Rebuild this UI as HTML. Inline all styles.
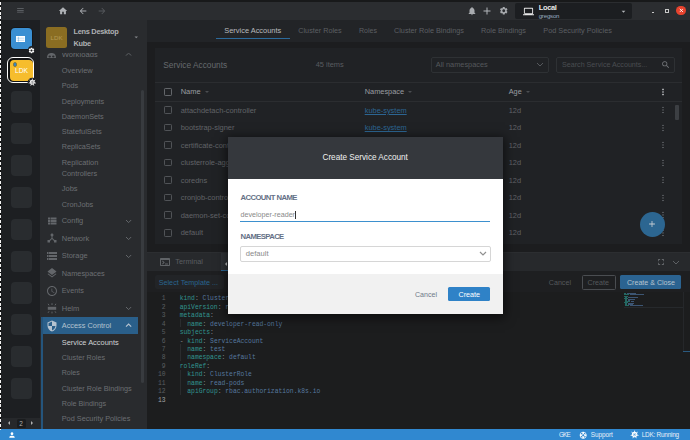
<!DOCTYPE html>
<html><head><meta charset="utf-8"><title>Lens</title>
<style>
html,body{margin:0;padding:0;background:#1c1d1f;}
body{width:690px;height:440px;overflow:hidden;position:relative;font-family:"Liberation Sans", sans-serif;}
i,.abs,.t,.ln,.cl{position:absolute;display:block;font-style:normal}
.t{line-height:12px;height:12px;white-space:nowrap}
.strip{left:0;top:0;width:690px;height:2px;background:#18191a}
.dash{left:0;top:0;width:1.2px;height:430px;background:repeating-linear-gradient(to bottom,#111 0,#111 1.85px,#f4f4f4 1.85px,#f4f4f4 4.85px)}
.topbar{left:1.2px;top:1.7px;width:689px;height:18.6px;background:#2b2d30}
.localbox{left:515px;top:2.7px;width:116.7px;height:16.6px;background:#1c1e21;border-radius:2px}
.hotbar{left:1.2px;top:20.3px;width:39px;height:408.6px;background:#1d1f22}
.hbsel{left:1.2px;top:417.5px;width:39px;height:11.4px;background:#26282b}
.hbnum{left:17px;top:418.5px;width:8.6px;height:9.4px;background:#1a1c1e;border-radius:1.5px}
.cell{left:10.5px;width:21.6px;height:21.2px;border-radius:4px;background:#292c2f}
.sidebar{left:40.2px;top:20.3px;width:106.5px;height:408.6px;background:#292b2e}
.main{left:146.7px;top:20.3px;width:543.3px;height:408.6px;background:#1c1d1f}
.tabs{left:146.7px;top:20.3px;width:543.3px;height:21.6px;background:#222427}
.tabline{left:216px;top:37.9px;width:74px;height:1.2px;background:#2c6a9b}
.card{left:155px;top:47.6px;width:526.8px;height:196.4px;background:#202225}
.hl{left:155px;width:526.8px;height:1px;background:#2b2d30}
.cb{left:164.2px;width:5.6px;height:5.6px;border:1px solid #505357;border-radius:1.2px}
.dots{left:662.3px;width:1.6px;height:8px;background:radial-gradient(circle,#5d6064 0.75px,transparent 0.95px) 0 0/1.6px 2.67px repeat-y}
.dots.hd{background:radial-gradient(circle,#b5b8bb 0.8px,transparent 1px) 0 0/1.6px 2.67px repeat-y}
.sort{top:91px;width:0;height:0;border-left:2px solid transparent;border-right:2px solid transparent;border-top:2.2px solid #4a4d51}
.selbox{left:431.2px;top:56.8px;width:116px;height:14.4px;border:0.9px solid #2e3134;border-radius:2px}
.searchbox{left:556.4px;top:56.8px;width:116.4px;height:14.4px;border:0.9px solid #2e3134;border-radius:2px}
.vscroll{left:675px;top:104.5px;width:3.6px;height:15.5px;background:#3c3f43;border-radius:1px}
.sscroll{left:141px;top:90px;width:3.2px;height:292.5px;background:#383b3f;border-radius:1.5px}
.fab{left:639.9px;top:211.8px;width:24.8px;height:24.8px;border-radius:50%;background:#2c6691}
.dockline{left:146.7px;top:252.3px;width:543.3px;height:1px;background:#2c2e31}
.dockhead{left:146.7px;top:253.3px;width:543.3px;height:17.5px;background:#27292c}
.docktab{left:220.8px;top:253.3px;width:60px;height:16.4px;background:#303337;border-bottom:1.1px solid #2c6a9b}
.dtic{left:225.4px;top:261.6px;border-top:2.2px solid transparent;border-bottom:2.2px solid transparent;border-right:2.4px solid #c8cacc}
.dockinfo{left:146.7px;top:270.8px;width:543.3px;height:21px;background:#1e1f21}
.tmpl{left:154.8px;top:274.8px;width:69.2px;height:14.3px;background:#222427;border-radius:2px}
.editor{left:146.7px;top:291.5px;width:543.3px;height:137.4px;background:#1c1d1e}
.btn1{left:581.8px;top:275px;width:32.2px;height:12.8px;border:0.9px solid #4a4d51;border-radius:1.5px}
.btn2{left:620.4px;top:275px;width:61px;height:14.4px;background:#2b6391;border-radius:1.5px}
.ln{left:150px;width:15.5px;text-align:right;font:6.34px/10px "Liberation Mono", monospace;height:10px;color:#5a5d60}
.ln.cur{color:#a0a2a4}
.cl{left:179.7px;font:6.34px/10px "Liberation Mono", monospace;height:10px;white-space:pre;color:#6a6d70}
.k{color:#319590}.v{color:#56789f}.p{color:#85888b}
.guide{left:180.2px;width:0.7px;height:8.47px;background:#2a2c2e}
.sideact{left:41.2px;top:317.2px;width:97px;height:17px;background:#2a5f8a}
.sideborder{left:40.6px;top:317.2px;width:2.2px;height:111.7px;background:#25557c}
.avatar{left:46px;top:27px;width:21.2px;height:21px;border-radius:2.5px;background:#8a6d22;text-align:center;line-height:21px;color:#b39a55;font-size:6.17px}
.hb1{left:10.5px;top:27.9px;width:21.7px;height:21.4px;border-radius:4px;box-shadow:0 0 0 0.8px #141516;background:#3a8fd2}
.hb2ring{left:7.3px;top:56.8px;width:25.2px;height:24.4px;border-radius:6px;border:1.4px solid #fff;background:#121314}
.hb2{left:10.3px;top:59.9px;width:22.3px;height:21.4px;border-radius:4px;background:#f6bd2d;text-align:center;line-height:21.4px;color:#fff;font-size:6.68px}
.hbdot{left:12.6px;top:61.9px;width:2.8px;height:2.8px;border-radius:50%;background:#2f86cf;border:0.5px solid #8a7a3a}
.dlgshadow{left:227.6px;top:137px;width:275.6px;height:177px;box-shadow:0 2px 10px 2px rgba(0,0,0,.55)}
.dlghead{left:227.6px;top:137px;width:275.6px;height:42px;background:#35383d}
.dlgbody{left:227.6px;top:178.8px;width:275.6px;height:95px;background:#fff}
.dlgfoot{left:227.6px;top:273.6px;width:275.6px;height:40.3px;background:#f1f1f1}
.uline{left:240.3px;top:220.6px;width:250px;height:1.4px;background:#3d90ce}
.caret{left:295.4px;top:210.5px;width:0.7px;height:8.4px;background:#333}
.dsel{left:240.3px;top:245.5px;width:249.2px;height:14.5px;border:0.9px solid #d6d6d6;border-radius:2px;background:#fff}
.dbtn{left:448px;top:287px;width:42.3px;height:14.4px;background:#2f82c7;border-radius:1.5px}
.status{left:0;top:428.9px;width:690px;height:11.1px;background:#3088d0}
.mm{left:624px;top:293.3px;width:20px;height:13.7px;opacity:.55;background:repeating-linear-gradient(to bottom,#2a6a68 0,#2a6a68 0.6px,transparent 0.6px,transparent 1.05px)}
.mmline{left:624px;top:306.8px;width:58.6px;height:0.7px;background:#26292c}
.ruler{left:682.6px;top:291.5px;width:0.7px;height:60px;background:#25272a}
.rtick{left:682.6px;top:350.9px;width:7.4px;height:0.9px;background:#2a5a80}
.winc{left:676.4px;top:6.2px;width:9.2px;height:9.2px;border-radius:50%;background:#e8432e}
.winmin{left:651.8px;top:12px;width:2.6px;height:1.1px;background:#c8c8c8}
.winmax{left:665.2px;top:8.8px;width:2.2px;height:2.2px;border:0.9px solid #c8c8c8}
</style></head><body>
<i class="strip"></i>
<i class="topbar"></i>
<i class="localbox"></i>
<i class="hotbar"></i><i class="hbsel"></i><i class="hbnum"></i>
<i class="cell" style="top:91.41px"></i><i class="cell" style="top:123.24px"></i><i class="cell" style="top:155.07px"></i><i class="cell" style="top:186.90px"></i><i class="cell" style="top:218.73px"></i><i class="cell" style="top:250.56px"></i><i class="cell" style="top:282.39px"></i><i class="cell" style="top:314.22px"></i><i class="cell" style="top:346.05px"></i><i class="cell" style="top:377.88px"></i>
<i class="hb1"></i>
<i class="hb2ring"></i><div class="abs hb2">LDK</div><i class="hbdot"></i>
<i class="sidebar"></i>
<i class="sideact"></i><i class="sideborder"></i>
<i class="sscroll"></i>
<div class="abs avatar">LDK</div>
<i class="main"></i><i class="tabs"></i><i class="tabline"></i>
<i class="card"></i>
<i class="selbox"></i><i class="searchbox"></i>
<i class="hl" style="top:81.6px"></i><i class="hl" style="top:101px"></i><i class="cb" style="top:106.20px"></i><i class="dots" style="top:106.00px"></i><i class="cb" style="top:123.73px"></i><i class="dots" style="top:123.53px"></i><i class="cb" style="top:141.26px"></i><i class="dots" style="top:141.06px"></i><i class="cb" style="top:158.79px"></i><i class="dots" style="top:158.59px"></i><i class="cb" style="top:176.32px"></i><i class="dots" style="top:176.12px"></i><i class="cb" style="top:193.85px"></i><i class="dots" style="top:193.65px"></i><i class="cb" style="top:211.38px"></i><i class="dots" style="top:211.18px"></i><i class="cb" style="top:228.91px"></i><i class="dots" style="top:228.71px"></i><i class="cb" style="top:88px;border-color:#63666a"></i><i class="dots hd" style="top:87.8px"></i><i class="sort" style="left:204.5px"></i><i class="sort" style="left:407.5px"></i><i class="sort" style="left:525.5px"></i>
<i class="vscroll"></i>
<i class="fab"></i>
<i class="dockline"></i><i class="dockhead"></i><i class="docktab"></i><i class="dtic"></i><i class="dockinfo"></i><i class="tmpl"></i>
<i class="editor"></i>
<i class="btn1"></i><i class="btn2"></i>
<i class="guide" style="top:318.88px"></i><i class="guide" style="top:344.28px"></i><i class="guide" style="top:352.75px"></i><i class="guide" style="top:369.69px"></i><i class="guide" style="top:378.16px"></i><i class="guide" style="top:386.63px"></i>
<span class="ln" style="top:294.20px">1</span><span class="cl" style="top:294.20px"><span class="k">kind</span><span class="p">: </span><span class="v">ClusterRoleBinding</span></span><span class="ln" style="top:302.67px">2</span><span class="cl" style="top:302.67px"><span class="k">apiVersion</span><span class="p">: </span><span class="v">rbac.authorization.k8s.io/v1</span></span><span class="ln" style="top:311.14px">3</span><span class="cl" style="top:311.14px"><span class="k">metadata</span><span class="p">:</span></span><span class="ln" style="top:319.61px">4</span><span class="cl" style="top:319.61px"><span class="p">  </span><span class="k">name</span><span class="p">: </span><span class="v">developer-read-only</span></span><span class="ln" style="top:328.08px">5</span><span class="cl" style="top:328.08px"><span class="k">subjects</span><span class="p">:</span></span><span class="ln" style="top:336.55px">6</span><span class="cl" style="top:336.55px"><span class="p">- </span><span class="k">kind</span><span class="p">: </span><span class="v">ServiceAccount</span></span><span class="ln" style="top:345.02px">7</span><span class="cl" style="top:345.02px"><span class="p">  </span><span class="k">name</span><span class="p">: </span><span class="v">test</span></span><span class="ln" style="top:353.49px">8</span><span class="cl" style="top:353.49px"><span class="p">  </span><span class="k">namespace</span><span class="p">: </span><span class="v">default</span></span><span class="ln" style="top:361.96px">9</span><span class="cl" style="top:361.96px"><span class="k">roleRef</span><span class="p">:</span></span><span class="ln" style="top:370.43px">10</span><span class="cl" style="top:370.43px"><span class="p">  </span><span class="k">kind</span><span class="p">: </span><span class="v">ClusterRole</span></span><span class="ln" style="top:378.90px">11</span><span class="cl" style="top:378.90px"><span class="p">  </span><span class="k">name</span><span class="p">: </span><span class="v">read-pods</span></span><span class="ln" style="top:387.37px">12</span><span class="cl" style="top:387.37px"><span class="p">  </span><span class="k">apiGroup</span><span class="p">: </span><span class="v">rbac.authorization.k8s.io</span></span><span class="ln cur" style="top:395.84px">13</span>
<i style="left:624.00px;top:293.40px;width:2.00px;height:0.6px;background:#246863"></i><i style="left:627.00px;top:293.40px;width:9.00px;height:0.6px;background:#3c5573"></i><i style="left:624.00px;top:294.45px;width:5.00px;height:0.6px;background:#246863"></i><i style="left:630.00px;top:294.45px;width:14.00px;height:0.6px;background:#3c5573"></i><i style="left:624.00px;top:295.50px;width:4.00px;height:0.6px;background:#246863"></i><i style="left:625.00px;top:296.55px;width:2.00px;height:0.6px;background:#246863"></i><i style="left:628.00px;top:296.55px;width:9.50px;height:0.6px;background:#3c5573"></i><i style="left:624.00px;top:297.60px;width:4.00px;height:0.6px;background:#246863"></i><i style="left:625.00px;top:298.65px;width:2.00px;height:0.6px;background:#246863"></i><i style="left:628.00px;top:298.65px;width:7.00px;height:0.6px;background:#3c5573"></i><i style="left:625.00px;top:299.70px;width:2.00px;height:0.6px;background:#246863"></i><i style="left:628.00px;top:299.70px;width:2.00px;height:0.6px;background:#3c5573"></i><i style="left:625.00px;top:300.75px;width:4.50px;height:0.6px;background:#246863"></i><i style="left:630.50px;top:300.75px;width:3.50px;height:0.6px;background:#3c5573"></i><i style="left:624.00px;top:301.80px;width:3.50px;height:0.6px;background:#246863"></i><i style="left:625.00px;top:302.85px;width:2.00px;height:0.6px;background:#246863"></i><i style="left:628.00px;top:302.85px;width:5.50px;height:0.6px;background:#3c5573"></i><i style="left:625.00px;top:303.90px;width:2.00px;height:0.6px;background:#246863"></i><i style="left:628.00px;top:303.90px;width:4.50px;height:0.6px;background:#3c5573"></i><i style="left:625.00px;top:304.95px;width:4.00px;height:0.6px;background:#246863"></i><i style="left:630.00px;top:304.95px;width:12.50px;height:0.6px;background:#3c5573"></i><i class="mmline"></i><i class="ruler"></i><i class="rtick"></i>
<i class="status"></i>
<i class="winmin"></i><i class="winmax"></i><i class="winc"></i>
<span class="t" style="left:538.70px;top:1.70px;font-size:7.4px;color:#e8e8e8;font-weight:700;letter-spacing:-0.266px;">Local</span><span class="t" style="left:538.70px;top:9.90px;font-size:6.1px;color:#9aabc2;letter-spacing:-0.206px;">gregson</span><span class="t" style="left:73.50px;top:26.30px;font-size:7.4px;color:#aeb0b3;font-weight:700;letter-spacing:-0.294px;">Lens Desktop</span><span class="t" style="left:73.50px;top:37.70px;font-size:7.4px;color:#aeb0b3;font-weight:700;letter-spacing:-0.250px;">Kube</span><span class="t" style="left:61.75px;top:48.90px;font-size:7.65px;color:#6c6f73;clip-path:inset(4.1px 0 0 0);">Workloads</span><span class="t" style="left:61.75px;top:65.25px;font-size:7.44px;color:#6c6f73;">Overview</span><span class="t" style="left:61.75px;top:80.40px;font-size:7.24px;color:#6c6f73;">Pods</span><span class="t" style="left:61.75px;top:95.70px;font-size:7.25px;color:#6c6f73;">Deployments</span><span class="t" style="left:61.75px;top:110.90px;font-size:7.27px;color:#6c6f73;">DaemonSets</span><span class="t" style="left:61.75px;top:126.25px;font-size:7.42px;color:#6c6f73;">StatefulSets</span><span class="t" style="left:61.75px;top:141.40px;font-size:7.22px;color:#6c6f73;">ReplicaSets</span><span class="t" style="left:61.75px;top:156.90px;font-size:7.38px;color:#6c6f73;">Replication</span><span class="t" style="left:61.75px;top:168.00px;font-size:7.34px;color:#6c6f73;">Controllers</span><span class="t" style="left:61.75px;top:183.40px;font-size:7.48px;color:#6c6f73;">Jobs</span><span class="t" style="left:61.75px;top:198.60px;font-size:7.36px;color:#6c6f73;">CronJobs</span><span class="t" style="left:61.75px;top:215.25px;font-size:7.44px;color:#6c6f73;">Config</span><span class="t" style="left:61.75px;top:232.50px;font-size:7.5px;color:#6c6f73;">Network</span><span class="t" style="left:61.75px;top:250.25px;font-size:7.42px;color:#6c6f73;">Storage</span><span class="t" style="left:61.75px;top:267.50px;font-size:7.37px;color:#6c6f73;">Namespaces</span><span class="t" style="left:61.75px;top:285.00px;font-size:7.2px;color:#6c6f73;">Events</span><span class="t" style="left:61.75px;top:302.50px;font-size:7.5px;color:#6c6f73;">Helm</span><span class="t" style="left:61.75px;top:320.00px;font-size:7.36px;color:#b5c3d0;">Access Control</span><span class="t" style="left:61.75px;top:336.50px;font-size:7.43px;color:#d0d2d4;">Service Accounts</span><span class="t" style="left:61.75px;top:351.70px;font-size:7.21px;color:#6c6f73;">Cluster Roles</span><span class="t" style="left:61.75px;top:367.00px;font-size:7.04px;color:#6c6f73;">Roles</span><span class="t" style="left:61.75px;top:382.50px;font-size:7.28px;color:#6c6f73;">Cluster Role Bindings</span><span class="t" style="left:61.75px;top:397.90px;font-size:7.21px;color:#6c6f73;">Role Bindings</span><span class="t" style="left:61.75px;top:412.70px;font-size:7.31px;color:#6c6f73;">Pod Security Policies</span><span class="t" style="left:224.30px;top:24.50px;font-size:7.43px;color:#b9bbbe;">Service Accounts</span><span class="t" style="left:298.30px;top:24.50px;font-size:7.23px;color:#5c5f63;">Cluster Roles</span><span class="t" style="left:359.00px;top:24.50px;font-size:7.04px;color:#5c5f63;">Roles</span><span class="t" style="left:394.00px;top:24.50px;font-size:7.28px;color:#5c5f63;">Cluster Role Bindings</span><span class="t" style="left:481.00px;top:24.50px;font-size:7.29px;color:#5c5f63;">Role Bindings</span><span class="t" style="left:543.30px;top:24.50px;font-size:7.31px;color:#5c5f63;">Pod Security Policies</span><span class="t" style="left:163.30px;top:58.80px;font-size:8.34px;color:#666a6e;">Service Accounts</span><span class="t" style="left:315.70px;top:58.80px;font-size:7.41px;color:#595c60;">45 items</span><span class="t" style="left:435.75px;top:58.80px;font-size:7.37px;color:#55585c;">All namespaces</span><span class="t" style="left:562.00px;top:58.80px;font-size:7.15px;color:#4a4d51;">Search Service Accounts...</span><span class="t" style="left:180.70px;top:86.30px;font-size:7.5px;color:#9a9da1;">Name</span><span class="t" style="left:364.70px;top:86.30px;font-size:7.4px;color:#9a9da1;">Namespace</span><span class="t" style="left:508.75px;top:86.30px;font-size:7.31px;color:#9a9da1;">Age</span><span class="t" style="left:180.70px;top:104.70px;font-size:7.45px;color:#606367;">attachdetach-controller</span><span class="t" style="left:364.70px;top:104.70px;font-size:7.42px;color:#2c6592;text-decoration:underline;">kube-system</span><span class="t" style="left:508.75px;top:104.70px;font-size:7.4px;color:#606367;">12d</span><span class="t" style="left:180.70px;top:122.23px;font-size:7.45px;color:#606367;">bootstrap-signer</span><span class="t" style="left:364.70px;top:122.23px;font-size:7.42px;color:#2c6592;text-decoration:underline;">kube-system</span><span class="t" style="left:508.75px;top:122.23px;font-size:7.4px;color:#606367;">12d</span><span class="t" style="left:180.70px;top:139.76px;font-size:7.45px;color:#606367;">certificate-controller</span><span class="t" style="left:364.70px;top:139.76px;font-size:7.42px;color:#2c6592;text-decoration:underline;">kube-system</span><span class="t" style="left:508.75px;top:139.76px;font-size:7.4px;color:#606367;">12d</span><span class="t" style="left:180.70px;top:157.29px;font-size:7.45px;color:#606367;">clusterrole-aggregation-controller</span><span class="t" style="left:364.70px;top:157.29px;font-size:7.42px;color:#2c6592;text-decoration:underline;">kube-system</span><span class="t" style="left:508.75px;top:157.29px;font-size:7.4px;color:#606367;">12d</span><span class="t" style="left:180.70px;top:174.82px;font-size:7.45px;color:#606367;">coredns</span><span class="t" style="left:364.70px;top:174.82px;font-size:7.42px;color:#2c6592;text-decoration:underline;">kube-system</span><span class="t" style="left:508.75px;top:174.82px;font-size:7.4px;color:#606367;">12d</span><span class="t" style="left:180.70px;top:192.35px;font-size:7.45px;color:#606367;">cronjob-controller</span><span class="t" style="left:364.70px;top:192.35px;font-size:7.42px;color:#2c6592;text-decoration:underline;">kube-system</span><span class="t" style="left:508.75px;top:192.35px;font-size:7.4px;color:#606367;">12d</span><span class="t" style="left:180.70px;top:209.88px;font-size:7.45px;color:#606367;">daemon-set-controller</span><span class="t" style="left:364.70px;top:209.88px;font-size:7.42px;color:#2c6592;text-decoration:underline;">kube-system</span><span class="t" style="left:508.75px;top:209.88px;font-size:7.4px;color:#606367;">12d</span><span class="t" style="left:180.70px;top:227.41px;font-size:7.45px;color:#606367;">default</span><span class="t" style="left:364.70px;top:227.41px;font-size:7.42px;color:#2c6592;text-decoration:underline;">default</span><span class="t" style="left:508.75px;top:227.41px;font-size:7.4px;color:#606367;">12d</span><span class="t" style="left:175.30px;top:256.20px;font-size:7.33px;color:#5a5d61;">Terminal</span><span class="t" style="left:158.70px;top:276.50px;font-size:7.22px;color:#29648f;">Select Template ...</span><span class="t" style="left:548.80px;top:276.70px;font-size:7.13px;color:#55585c;">Cancel</span><span class="t" style="left:587.50px;top:276.70px;font-size:7.16px;color:#55585c;">Create</span><span class="t" style="left:627.00px;top:276.70px;font-size:7.08px;color:#b8c4cf;">Create &amp; Close</span><span class="t" style="left:558.90px;top:429.30px;font-size:6.3px;color:#e8f0f8;letter-spacing:-0.702px;">GKE</span><span class="t" style="left:590.70px;top:429.30px;font-size:6.4px;color:#e8f0f8;letter-spacing:-0.045px;">Support</span><span class="t" style="left:641.70px;top:429.30px;font-size:6.4px;color:#e8f0f8;letter-spacing:-0.212px;">LDK: Running</span><span class="t" style="left:19.30px;top:417.50px;font-size:6.47px;color:#b0b0b0;">2</span>
<svg class="abs" style="left:124.60px;top:52.30px;clip-path:inset(1px 0 0 0);" width="7.2" height="4.6" viewBox="-1 -1 7.2 4.6"><path d="M0,2.6 L2.6,0 L5.2,2.6" fill="none" stroke="#63666a" stroke-width="1.0"/></svg><svg class="abs" style="left:124.60px;top:218.75px;" width="7.2" height="4.6" viewBox="-1 -1 7.2 4.6"><path d="M0,0 L2.6,2.6 L5.2,0" fill="none" stroke="#63666a" stroke-width="1.0"/></svg><svg class="abs" style="left:124.60px;top:236.00px;" width="7.2" height="4.6" viewBox="-1 -1 7.2 4.6"><path d="M0,0 L2.6,2.6 L5.2,0" fill="none" stroke="#63666a" stroke-width="1.0"/></svg><svg class="abs" style="left:124.60px;top:253.75px;" width="7.2" height="4.6" viewBox="-1 -1 7.2 4.6"><path d="M0,0 L2.6,2.6 L5.2,0" fill="none" stroke="#63666a" stroke-width="1.0"/></svg><svg class="abs" style="left:124.60px;top:306.00px;" width="7.2" height="4.6" viewBox="-1 -1 7.2 4.6"><path d="M0,0 L2.6,2.6 L5.2,0" fill="none" stroke="#63666a" stroke-width="1.0"/></svg><svg class="abs" style="left:124.60px;top:323.20px;" width="7.2" height="4.6" viewBox="-1 -1 7.2 4.6"><path d="M0,2.6 L2.6,0 L5.2,2.6" fill="none" stroke="#b5c3d0" stroke-width="1.2"/></svg><svg class="abs" style="left:536.40px;top:62.10px;" width="8" height="5.0" viewBox="-1 -1 8 5.0"><path d="M0,0 L3.0,3.0 L6,0" fill="none" stroke="#55585c" stroke-width="1.0"/></svg><svg class="abs" style="left:671.80px;top:259.80px;" width="8" height="5.0" viewBox="-1 -1 8 5.0"><path d="M0,0 L3.0,3.0 L6,0" fill="none" stroke="#5d6064" stroke-width="1.0"/></svg><svg class="abs" style="left:15.90px;top:6.30px;" width="8.8" height="8.8" viewBox="0 0 24 24"><path fill="#6a6d71" d="M3 18h18v-2H3v2zm0-5h18v-2H3v2zm0-7v2h18V6H3z"/></svg><svg class="abs" style="left:58.30px;top:5.90px;" width="10" height="10" viewBox="0 0 24 24"><path fill="#aeb1b5" d="M10 20v-6h4v6h5v-8h3L12 3 2 12h3v8z"/></svg><svg class="abs" style="left:78.00px;top:5.90px;" width="10" height="10" viewBox="0 0 24 24"><path fill="#a9acb0" d="M20 11H7.83l5.59-5.59L12 4l-8 8 8 8 1.41-1.41L7.83 13H20v-2z"/></svg><svg class="abs" style="left:97.40px;top:5.90px;" width="10" height="10" viewBox="0 0 24 24"><path fill="#55585c" d="M12 4l-1.41 1.41L16.17 11H4v2h12.17l-5.58 5.59L12 20l8-8z"/></svg><svg class="abs" style="left:466.70px;top:6.00px;" width="10" height="10" viewBox="0 0 24 24"><path fill="#a8abaf" d="M12 22c1.1 0 2-.9 2-2h-4c0 1.1.89 2 2 2zm6-6v-5c0-3.07-1.64-5.64-4.5-6.32V4c0-.83-.67-1.500-1.500-1.500s-1.500.67-1.500 1.500v.68C7.630 5.360 6 7.920 6 11v5l-2 2v1h16v-1l-2-2z"/></svg><svg class="abs" style="left:480.70px;top:5.00px;" width="12" height="12" viewBox="0 0 24 24"><path fill="#b2b5b9" d="M19 13h-6v6h-2v-6H5v-2h6V5h2v6h6v2z"/></svg><svg class="abs" style="left:498.95px;top:6.25px;" width="9.5" height="9.5" viewBox="0 0 24 24"><path fill="#a8abaf" d="M19.140 12.940c.04-.3.060-.610.060-.940 0-.320-.020-.640-.070-.940l2.030-1.580a.49.49 0 0 0 .120-.610l-1.920-3.320a.488.488 0 0 0-.590-.220l-2.390.96c-.5-.38-1.030-.7-1.620-.94l-.36-2.540a.484.484 0 0 0-.48-.410h-3.840c-.24 0-.43.170-.47.410l-.36 2.540c-.59.240-1.130.570-1.620.940l-2.390-.96c-.22-.080-.47 0-.59.220L2.740 8.870c-.12.210-.08.470.12.610l2.030 1.580c-.05.3-.09.630-.09.940s.02.640.07.940l-2.030 1.580a.49.49 0 0 0-.12.610l1.920 3.320c.12.220.37.290.59.220l2.390-.96c.5.380 1.030.7 1.620.94l.36 2.540c.05.240.24.410.48.410h3.840c.24 0 .44-.17.470-.41l.36-2.540c.59-.24 1.130-.56 1.620-.94l2.390.96c.22.080.47 0 .59-.22l1.920-3.320c.12-.22.070-.47-.12-.61l-2.010-1.580zM12 15.600c-1.980 0-3.600-1.620-3.600-3.600s1.620-3.600 3.600-3.600 3.600 1.620 3.600 3.600-1.620 3.600-3.600 3.600z"/></svg><svg class="abs" style="left:522.50px;top:5.50px;" width="11" height="11" viewBox="0 0 24 24"><path fill="#e8e8e8" d="M20 18c1.1 0 1.990-.9 1.990-2L22 6c0-1.100-.9-2-2-2H4c-1.100 0-2 .9-2 2v10c0 1.100.9 2 2 2H0v2h24v-2h-4zM4 6h16v10H4V6z"/></svg><svg class="abs" style="left:619.20px;top:6.50px;" width="9" height="9" viewBox="0 0 24 24"><path fill="#b3b6ba" d="M7 10l5 5 5-5z"/></svg><svg class="abs" style="left:131.75px;top:33.35px;" width="8.5" height="8.5" viewBox="0 0 24 24"><path fill="#85888b" d="M7 10l5 5 5-5z"/></svg><svg class="abs" style="left:47.00px;top:53.00px;" width="9" height="5.3" viewBox="0 0 9 5.3"><path d="M0,5.300 C0,0.500 2.500,0 4.500,0 C6.500,0 9,0.500 9,5.300 Z" fill="#63666a"/><ellipse cx="2.700" cy="3.500" rx="1.250" ry="1" fill="#292b2e"/><ellipse cx="6.300" cy="3.500" rx="1.250" ry="1" fill="#292b2e"/></svg><svg class="abs" style="left:45.50px;top:214.75px;" width="12" height="12" viewBox="0 0 24 24"><path fill="#63666a" d="M4 14h4v-4H4v4zm0 5h4v-4H4v4zM4 9h4V5H4v4zm5 5h12v-4H9v4zm0 5h12v-4H9v4zM9 5v4h12V5H9z"/></svg><svg class="abs" style="left:45.50px;top:232.00px;" width="12" height="12" viewBox="0 0 24 24"><path fill="#63666a" d="M17 16l-4-4V8.820C14.160 8.400 15 7.300 15 6c0-1.660-1.340-3-3-3S9 4.340 9 6c0 1.300.84 2.400 2 2.820V12l-4 4H3v5h5v-3.050l4-4.200 4 4.200V21h5v-5h-4z"/></svg><svg class="abs" style="left:45.50px;top:249.75px;" width="12" height="12" viewBox="0 0 24 24"><path fill="#63666a" d="M2 20h20v-4H2v4zm2-3h2v2H4v-2zM2 4v4h20V4H2zm4 3H4V5h2v2zm-4 7h20v-4H2v4zm2-3h2v2H4v-2z"/></svg><svg class="abs" style="left:45.50px;top:267.00px;" width="12" height="12" viewBox="0 0 24 24"><path fill="#63666a" d="M11.990 18.540l-7.370-5.730L3 14.070l9 7 9-7-1.630-1.270-7.380 5.740zM12 16l7.360-5.730L21 9l-9-7-9 7 1.630 1.270L12 16z"/></svg><svg class="abs" style="left:45.50px;top:284.50px;" width="12" height="12" viewBox="0 0 24 24"><path fill="#63666a" d="M11.990 2C6.470 2 2 6.480 2 12s4.470 10 9.990 10C17.520 22 22 17.520 22 12S17.520 2 11.990 2zM12 20c-4.420 0-8-3.580-8-8s3.580-8 8-8 8 3.580 8 8-3.580 8-8 8zm.5-13H11v6l5.250 3.150.75-1.230-4.500-2.670z"/></svg><svg class="abs" style="left:45.50px;top:319.50px;" width="12" height="12" viewBox="0 0 24 24"><path fill="#b5c3d0" d="M12 1L3 5v6c0 5.550 3.840 10.740 9 12 5.160-1.260 9-6.450 9-12V5l-9-4zm0 10.990h7c-.53 4.120-3.280 7.790-7 8.940V12H5V6.300l7-3.110v8.800z"/></svg><svg class="abs" style="left:45.50px;top:302.00px;" width="12" height="12" viewBox="0 0 20 20"><g stroke="#63666a" stroke-width="1.6" fill="none"><path d="M3 8h14v5H3z" stroke="none" fill="#63666a"/><path d="M5 5.500L3.500 3M10 5V2M15 5.500L16.500 3M5 15.500L3.500 18M10 16v3M15 15.500l1.500 2.500"/></g></svg><svg class="abs" style="left:647.30px;top:219.20px;" width="10" height="10" viewBox="0 0 24 24"><path fill="#c5cdd4" d="M19 13h-6v6h-2v-6H5v-2h6V5h2v6h6v2z"/></svg><svg class="abs" style="left:678.60px;top:8.40px;" width="4.8" height="4.8" viewBox="0 0 10 10"><path d="M1.500 1.500L8.500 8.500M8.500 1.500L1.500 8.500" stroke="#fff" stroke-width="1.8" fill="none"/></svg><svg class="abs" style="left:661.25px;top:60.05px;" width="9.5" height="9.5" viewBox="0 0 24 24"><path fill="#74777b" d="M15.500 14h-.79l-.28-.27A6.471 6.471 0 0 0 16 9.500 6.500 6.500 0 1 0 9.500 16c1.610 0 3.090-.59 4.230-1.570l.27.280v.79l5 4.990L20.490 19l-4.990-5zm-6 0C7.010 14 5 11.990 5 9.500S7.010 5 9.500 5 14 7.010 14 9.500 11.990 14 9.500 14z"/></svg><svg class="abs" style="left:655.60px;top:257.30px;" width="10" height="10" viewBox="0 0 24 24"><path fill="#63666a" d="M7 14H5v5h5v-2H7v-3zm-2-4h2V7h3V5H5v5zm12 7h-3v2h5v-5h-2v3zM14 5v2h3v3h2V5h-5z"/></svg><svg class="abs" style="left:159.00px;top:255.90px;" width="12" height="12" viewBox="0 0 24 24"><path fill="#606367" d="M20 4H4c-1.110 0-2 .9-2 2v12c0 1.100.89 2 2 2h16c1.100 0 2-.9 2-2V6c0-1.100-.89-2-2-2zm0 14H4V8h16v10zm-2-1h-6v-2h6v2zM7.500 17l-1.410-1.410L8.670 13l-2.590-2.590L7.500 9l4 4-4 4z"/></svg><svg class="abs" style="left:7.80px;top:430.80px;" width="8" height="8" viewBox="0 0 24 24"><path fill="#ffffff" d="M12 12c2.210 0 4-1.790 4-4s-1.790-4-4-4-4 1.790-4 4 1.790 4 4 4zm0 2c-2.670 0-8 1.340-8 4v2h16v-2c0-2.660-5.330-4-8-4z"/></svg><svg class="abs" style="left:579.30px;top:430.60px;" width="8.4" height="8.4" viewBox="0 0 24 24"><path fill="#ffffff" d="M12 2C6.480 2 2 6.480 2 12s4.480 10 10 10 10-4.480 10-10S17.520 2 12 2zm7.460 7.120l-2.780 1.150a4.982 4.982 0 0 0-2.950-2.940l1.150-2.780c2.100.8 3.770 2.470 4.580 4.570zM12 15c-1.660 0-3-1.340-3-3s1.340-3 3-3 3 1.340 3 3-1.340 3-3 3zM9.130 4.540l1.170 2.780a5 5 0 0 0-2.980 2.970L4.540 9.130a7.984 7.984 0 0 1 4.590-4.590zM4.540 14.870l2.780-1.150a4.968 4.968 0 0 0 2.970 2.960l-1.170 2.780a7.996 7.996 0 0 1-4.580-4.590zm10.340 4.590l-1.150-2.780a4.978 4.978 0 0 0 2.950-2.970l2.780 1.170a8.007 8.007 0 0 1-4.580 4.580z"/></svg><svg class="abs" style="left:629.00px;top:429.20px" width="11.2" height="11.2" viewBox="-5.6 -5.6 11.2 11.2"><circle cx="0" cy="0" r="2.23" fill="none" stroke="#ffffff" stroke-width="1.01"/><line x1="0.00" y1="-0.90" x2="0.00" y2="-3.60" stroke="#ffffff" stroke-width="0.86" stroke-linecap="round"/><line x1="0.70" y1="-0.56" x2="2.81" y2="-2.24" stroke="#ffffff" stroke-width="0.86" stroke-linecap="round"/><line x1="0.88" y1="0.20" x2="3.51" y2="0.80" stroke="#ffffff" stroke-width="0.86" stroke-linecap="round"/><line x1="0.39" y1="0.81" x2="1.56" y2="3.24" stroke="#ffffff" stroke-width="0.86" stroke-linecap="round"/><line x1="-0.39" y1="0.81" x2="-1.56" y2="3.24" stroke="#ffffff" stroke-width="0.86" stroke-linecap="round"/><line x1="-0.88" y1="0.20" x2="-3.51" y2="0.80" stroke="#ffffff" stroke-width="0.86" stroke-linecap="round"/><line x1="-0.70" y1="-0.56" x2="-2.81" y2="-2.24" stroke="#ffffff" stroke-width="0.86" stroke-linecap="round"/></svg><svg class="abs" style="left:26.70px;top:76.70px" width="10.6" height="10.6" viewBox="-5.3 -5.3 10.6 10.6"><circle cx="0" cy="0" r="4.6" fill="#1d1f22"/><circle cx="0" cy="0" r="2.05" fill="none" stroke="#ffffff" stroke-width="0.92"/><line x1="0.00" y1="-0.82" x2="0.00" y2="-3.30" stroke="#ffffff" stroke-width="0.79" stroke-linecap="round"/><line x1="0.65" y1="-0.51" x2="2.58" y2="-2.06" stroke="#ffffff" stroke-width="0.79" stroke-linecap="round"/><line x1="0.80" y1="0.18" x2="3.22" y2="0.73" stroke="#ffffff" stroke-width="0.79" stroke-linecap="round"/><line x1="0.36" y1="0.74" x2="1.43" y2="2.97" stroke="#ffffff" stroke-width="0.79" stroke-linecap="round"/><line x1="-0.36" y1="0.74" x2="-1.43" y2="2.97" stroke="#ffffff" stroke-width="0.79" stroke-linecap="round"/><line x1="-0.80" y1="0.18" x2="-3.22" y2="0.73" stroke="#ffffff" stroke-width="0.79" stroke-linecap="round"/><line x1="-0.65" y1="-0.51" x2="-2.58" y2="-2.06" stroke="#ffffff" stroke-width="0.79" stroke-linecap="round"/></svg><i class="abs" style="left:7.6px;top:420.6px;border-top:2.4px solid transparent;border-bottom:2.4px solid transparent;border-right:2.8px solid #b0b0b0"></i><i class="abs" style="left:31.4px;top:420.6px;border-top:2.4px solid transparent;border-bottom:2.4px solid transparent;border-left:2.8px solid #b0b0b0"></i><i class="abs" style="left:27.5px;top:46.3px;width:8.4px;height:8.4px;border-radius:50%;background:#1d1f22"></i><svg class="abs" style="left:28.20px;top:47.00px;" width="7" height="7" viewBox="0 0 24 24"><path fill="#ffffff" d="M19.140 12.940c.04-.3.060-.610.060-.940 0-.320-.020-.640-.070-.940l2.030-1.580a.49.49 0 0 0 .120-.610l-1.920-3.320a.488.488 0 0 0-.590-.220l-2.390.96c-.5-.38-1.030-.7-1.620-.94l-.36-2.540a.484.484 0 0 0-.48-.410h-3.840c-.24 0-.43.170-.47.410l-.36 2.540c-.59.240-1.130.570-1.620.940l-2.390-.96c-.22-.080-.47 0-.59.220L2.740 8.870c-.12.210-.08.470.12.610l2.030 1.580c-.05.3-.09.630-.09.940s.02.640.07.940l-2.030 1.580a.49.49 0 0 0-.12.610l1.920 3.320c.12.220.37.290.59.220l2.390-.96c.5.380 1.030.7 1.620.94l.36 2.540c.05.240.24.410.48.410h3.840c.24 0 .44-.17.470-.41l.36-2.540c.59-.24 1.130-.56 1.620-.94l2.390.96c.22.080.47 0 .59-.22l1.920-3.320c.12-.22.070-.47-.12-.61l-2.010-1.580zM12 15.600c-1.980 0-3.600-1.620-3.600-3.600s1.620-3.600 3.600-3.600 3.600 1.620 3.600 3.600-1.620 3.600-3.600 3.600z"/></svg><svg class="abs" style="left:16.30px;top:35.60px;" width="9" height="6.4" viewBox="0 0 9 6.4"><rect width="9" height="6.4" fill="#fff"/><g stroke="#3a8fd2" stroke-width="0.45" opacity="0.75"><path d="M0.700 2.150H8.300M0.700 4.250H8.300M2.500 0.700V5.700" fill="none"/></g></svg>
<i class="dlgshadow"></i><i class="dlghead"></i><i class="dlgbody"></i><i class="dlgfoot"></i>
<i class="uline"></i><i class="caret"></i><i class="dsel"></i><i class="dbtn"></i>
<span class="t" style="left:322.50px;top:152.00px;font-size:8.18px;color:#f0f0f0;">Create Service Account</span><span class="t" style="left:240.50px;top:191.50px;font-size:7.7px;color:#647086;font-weight:700;letter-spacing:-0.567px;">ACCOUNT NAME</span><span class="t" style="left:240.50px;top:209.10px;font-size:7.16px;color:#8a8a8a;">developer-reader</span><span class="t" style="left:240.50px;top:230.50px;font-size:7.7px;color:#647086;font-weight:700;letter-spacing:-0.603px;">NAMESPACE</span><span class="t" style="left:245.75px;top:248.10px;font-size:7.58px;color:#8a8a8a;">default</span><span class="t" style="left:415.00px;top:288.70px;font-size:7.07px;color:#6f7989;">Cancel</span><span class="t" style="left:458.50px;top:288.70px;font-size:7.16px;color:#ffffff;">Create</span>
<svg class="abs" style="left:479.00px;top:251.30px;" width="8" height="5.0" viewBox="-1 -1 8 5.0"><path d="M0,0 L3.0,3.0 L6,0" fill="none" stroke="#909090" stroke-width="1.2"/></svg>
<i class="dash"></i>
</body></html>
